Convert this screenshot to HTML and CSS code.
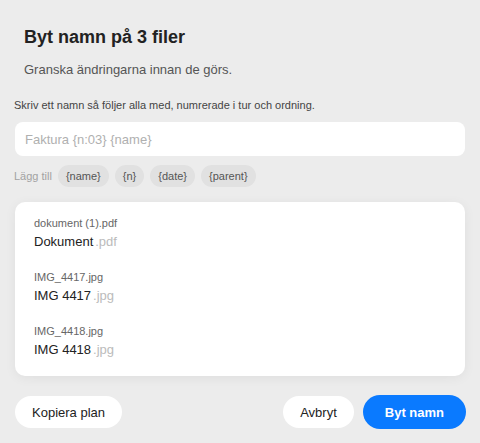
FILE: index.html
```html
<!DOCTYPE html>
<html lang="sv">
<head>
<meta charset="utf-8">
<title>Byt namn på 3 filer</title>
<link rel="stylesheet" href="styles.css">
</head>
<body>
<div class="dialog">
  <header class="head">
    <h1 class="title">Byt namn på 3 filer</h1>
    <p class="subtitle">Granska ändringarna innan de görs.</p>
  </header>
  <label class="label" for="pattern">Skriv ett namn så följer alla med, numrerade i tur och ordning.</label>
  <input class="field" id="pattern" type="text" placeholder="Faktura {n:03} {name}">
  <div class="tokens">
    <span class="tokens-label">Lägg till</span>
    <span class="chip">{name}</span>
    <span class="chip">{n}</span>
    <span class="chip">{date}</span>
    <span class="chip">{parent}</span>
  </div>
  <div class="card">
    <div class="item">
      <div class="orig">dokument (1).pdf</div>
      <div class="new">Dokument<span class="ext">.pdf</span></div>
    </div>
    <div class="item">
      <div class="orig">IMG_4417.jpg</div>
      <div class="new">IMG 4417<span class="ext">.jpg</span></div>
    </div>
    <div class="item">
      <div class="orig">IMG_4418.jpg</div>
      <div class="new">IMG 4418<span class="ext">.jpg</span></div>
    </div>
  </div>
  <div class="actions">
    <button class="btn">Kopiera plan</button>
    <div class="spacer"></div>
    <button class="btn">Avbryt</button>
    <button class="btn primary">Byt namn</button>
  </div>
</div>
</body>
</html>
```
FILE: styles.css
```css
* { box-sizing: border-box; }
html, body {
  margin: 0;
  padding: 0;
  background: #ececec;
  font-family: "Liberation Sans", Arial, sans-serif;
  color: #222;
}
.dialog {
  width: 480px;
  height: 443px;
  padding: 26px 15px 0 15px;
  display: flex;
  flex-direction: column;
}
.head {
  padding: 0 9px;
}
.title {
  margin: 0;
  font-size: 18px;
  line-height: 22px;
  font-weight: bold;
  color: #222;
}
.subtitle {
  margin: 14px 0 0 0;
  font-size: 13px;
  line-height: 16px;
  color: #555;
}
.label {
  display: block;
  margin: 20px 0 0 -1px;
  font-size: 11px;
  line-height: 14px;
  color: #444;
}
.field {
  display: block;
  width: 450px;
  height: 34px;
  margin-top: 10px;
  border: none;
  border-radius: 8px;
  background: #fff;
  padding: 0 10px;
  font-family: inherit;
  font-size: 13px;
  color: #222;
  outline: none;
}
.field::placeholder {
  color: #b0b0b0;
}
.tokens {
  display: flex;
  align-items: center;
  gap: 6px;
  margin: 9px 0 0 -1px;
}
.tokens-label {
  font-size: 11px;
  color: #a2a2a2;
}
.chip {
  display: inline-flex;
  align-items: center;
  height: 22px;
  padding: 0 8px;
  border-radius: 11px;
  background: #e1e1e1;
  font-size: 11px;
  color: #555;
}
.card {
  margin-top: 15px;
  background: #fff;
  border-radius: 10px;
  box-shadow: 0 2px 12px rgba(0, 0, 0, 0.06);
  padding: 14px 19px 16px;
  display: flex;
  flex-direction: column;
  gap: 19px;
  height: 174px;
}
.orig {
  font-size: 11px;
  line-height: 14px;
  color: #666;
}
.new {
  margin-top: 3px;
  font-size: 13px;
  line-height: 18px;
  color: #222;
}
.ext {
  color: #bbb;
  margin-left: 2px;
}
.actions {
  display: flex;
  align-items: center;
  margin-top: 19px;
}
.spacer { flex: 1; }
.btn {
  height: 32px;
  padding: 0 17px;
  border: none;
  border-radius: 16px;
  background: #fff;
  font-family: inherit;
  font-size: 13px;
  color: #222;
  cursor: pointer;
}
.primary {
  height: 34px;
  margin-left: 9px;
  margin-right: -1px;
  padding: 0 22px;
  border-radius: 17px;
  background: #0a7aff;
  color: #fff;
  font-weight: bold;
}
```
